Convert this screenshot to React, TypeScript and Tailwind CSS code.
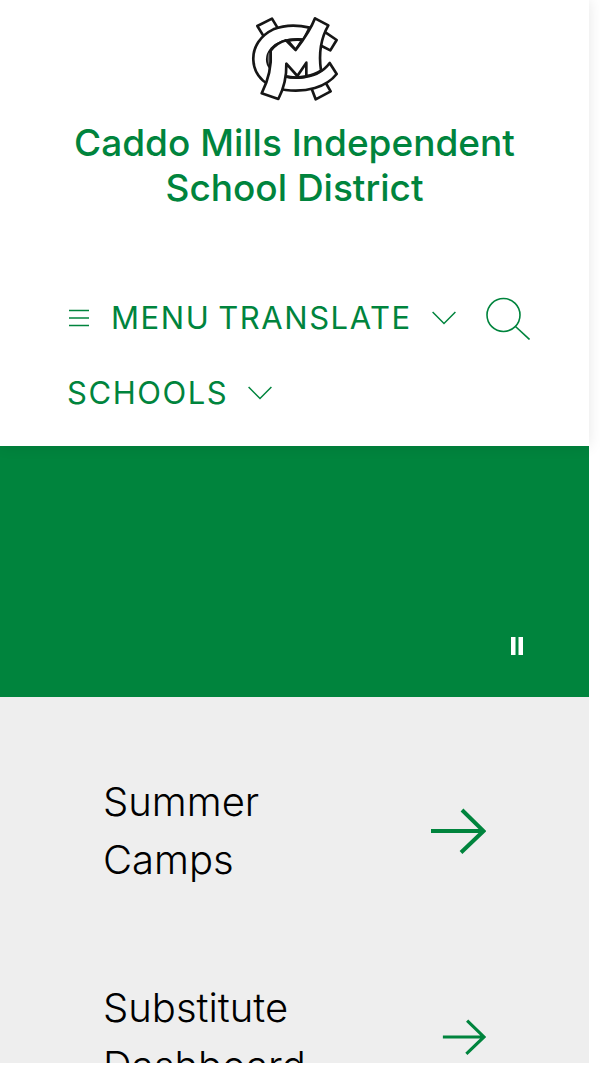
type IconProps = { className?: string };

function Logo() {
  return (
    <svg
      className="h-[86px] w-[88px]"
      viewBox="46 33 264 258"
      fill="#fff"
      stroke="#161616"
      strokeWidth="8"
      strokeLinejoin="round"
      role="img"
      aria-label="Caddo Mills ISD logo"
    >
      <path d="M65 63 109 41 129 74 86 97Z" />
      <path d="M266 80 303 105 284 136 252 120Z" />
      <path d="M226 246 240 283 285 259 267 228Z" />
      <path d="M222 68C185 59 145 60 113 73C75 91 51 126 53 165C55 215 96 250 150 255C212 262 271 248 303 207L282 174C262 202 228 216 190 218C170 219 158 217 146 213L105 190C91 175 91 151 107 132C128 109 165 101 204 104Z" />
      <path d="M99 143C94 158 95 174 103 186L107 144Z" fill="#777" stroke="none" />
      <path d="M156 107 180 135 200 105C184 102 170 104 156 107Z" />
      <path d="M238 40 278 61C256 99 249 149 256 197C243 206 228 211 212 213V173L185 213 152 176C153 215 143 253 128 282L78 265C98 226 108 178 105 137C120 118 136 110 151 106L180 135C203 105 224 77 238 40Z" />
      <path d="M151 215C173 219 193 218 212 214" fill="none" />
    </svg>
  );
}

function MenuIcon() {
  return (
    <svg className="h-5 w-[22px]" viewBox="0 0 22 20" stroke="currentColor" strokeWidth="1.5" aria-hidden="true">
      <path d="M2 2.5H22M2 10H22M2 17.5H22" />
    </svg>
  );
}

function ChevronIcon() {
  return (
    <svg className="h-4 w-6" viewBox="0 0 24 16" fill="none" stroke="currentColor" strokeWidth="1.5" aria-hidden="true">
      <path d="M.6 2 12 13.5 23.4 2" />
    </svg>
  );
}

function SearchIcon() {
  return (
    <svg className="h-11 w-11" viewBox="0 0 44 44" fill="none" stroke="currentColor" strokeWidth="1.6" aria-hidden="true">
      <circle cx="17.500" cy="19" r="16.500" />
      <path d="M29.500 30.500 43.500 43.500" />
    </svg>
  );
}

function ArrowIcon({ className }: IconProps) {
  return (
    <svg className={className} viewBox="0 0 56 46" fill="none" stroke="currentColor" strokeWidth="4" aria-hidden="true">
      <path d="M1 23H53M32 2 53.500 23 31 44.500" />
    </svg>
  );
}

const links = [
  { label: "Summer Camps", arrow: "h-[46px] w-14 shrink-0" },
  { label: "Substitute Dashboard", arrow: "h-9 w-11 shrink-0" },
];

export default function App() {
  return (
    <div className="flex h-screen flex-col bg-white pr-[11px] pb-0.5 font-['Inter',sans-serif] text-[#00843d]">
      <header className="relative shrink-0 bg-white pb-4 shadow-[0_0_14px_rgba(0,0,0,0.1)]">
        <a href="#home" className="flex flex-col items-center px-12 pt-4">
          <Logo />
          <h1 className="mt-[18px] text-center text-[37px] leading-[45px] font-medium">
            Caddo Mills Independent School District
          </h1>
        </a>
        <nav className="mt-[70px] flex flex-wrap items-center pr-[59px] pl-[67px] text-[31px] leading-[38px]">
          <button type="button" className="flex h-[75px] items-center gap-[22px] tracking-wider">
            <MenuIcon />
            MENU
          </button>
          <button type="button" className="ml-2 flex h-[75px] items-center gap-5 tracking-wider">
            TRANSLATE
            <ChevronIcon />
          </button>
          <button type="button" aria-label="Search" className="ml-auto flex h-[75px] items-center">
            <SearchIcon />
          </button>
          <button type="button" className="flex h-[75px] items-center gap-5 tracking-wider">
            SCHOOLS
            <ChevronIcon />
          </button>
        </nav>
      </header>

      <section aria-label="Gallery" className="flex h-[251px] shrink-0 items-end justify-end bg-[#00843d] pr-[66px] pb-[41px]">
        <button type="button" aria-label="Pause gallery" className="text-white">
          <svg className="h-5 w-3" viewBox="0 0 12 20" fill="currentColor" aria-hidden="true">
            <path d="M0 1H4.500V19H0ZM7.500 1H12V19H7.500Z" />
          </svg>
        </button>
      </section>

      <main className="min-h-0 flex-1 overflow-y-auto bg-[#eee] px-[103px] pt-[76px] [scrollbar-width:none]">
        <ul className="flex flex-col gap-[90px]">
          {links.map((link) => (
            <li key={link.label}>
              <a href="#links" className="flex items-center justify-between">
                <span className="w-52 text-[40px] leading-[58px] font-light text-black">{link.label}</span>
                <ArrowIcon className={link.arrow} />
              </a>
            </li>
          ))}
        </ul>
      </main>
    </div>
  );
}
